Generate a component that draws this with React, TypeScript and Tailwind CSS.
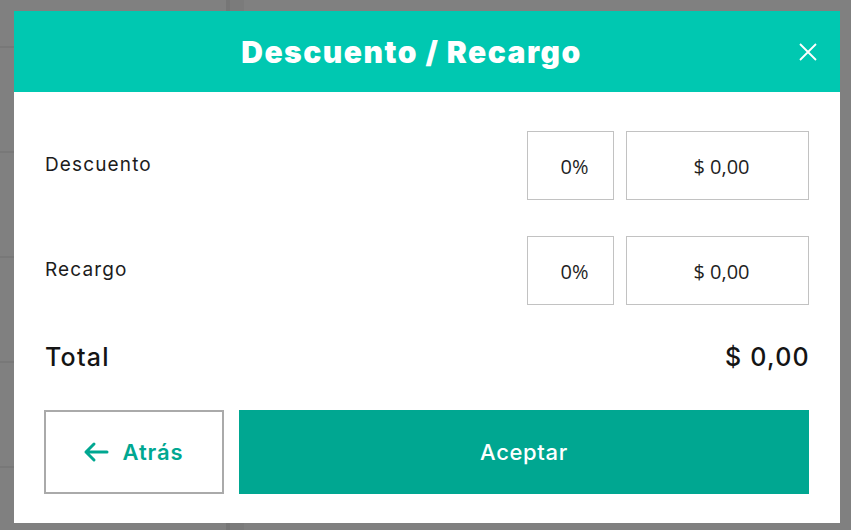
import { useState } from "react";

function BackgroundPage() {
  // dimmed page behind the modal
  const rows = [0, 1, 2, 3, 4, 5];
  return (
    <div className="absolute inset-0 flex bg-[#808080]">
      <div className="w-[226px] flex flex-col pt-[46px]">
        {rows.map((r) => (
          <div key={r} className="shrink-0 h-[105px] border-t-[2px] border-[#787878]" />
        ))}
      </div>
      <div className="w-[4px] bg-[#767676]" />
      <div className="w-[14px] bg-[#7b7b7b]" />
      <div className="flex-1" />
    </div>
  );
}

function ValueBox({ value, wide }: { value: string; wide?: boolean }) {
  return (
    <div
      className={
        (wide ? "w-[183px]" : "w-[87px]") +
        " h-[69px] border border-[#c2c2c2] flex items-center justify-center pt-[3px] pl-[8px] text-[20px] text-[#1f1f1f]"
      }
      style={{ fontFamily: '"Open Sans", "Noto Sans", sans-serif' }}
    >
      {value}
    </div>
  );
}

function App() {
  const [descuento] = useState({ pct: "0%", monto: "$ 0,00" });
  const [recargo] = useState({ pct: "0%", monto: "$ 0,00" });

  return (
    <div className="relative w-[851px] h-[530px] overflow-hidden" style={{ fontFamily: 'Inter, "Noto Sans", sans-serif' }}>
      <BackgroundPage />
      <div className="relative pt-[11px] pl-[14px]">
        <div className="w-[826px] h-[512px] bg-white flex flex-col">
          <div className="relative h-[81px] bg-[#00c8b1] flex items-center justify-center pr-[31px]">
            <h1 className="text-white text-[30px] font-black tracking-[0.05em] mt-[2px]">Descuento / Recargo</h1>
            <button className="absolute right-[22px] top-[31px] w-[20px] h-[20px] flex items-center justify-center">
              <svg width="20" height="20" viewBox="0 0 20 20" fill="none" stroke="white" strokeWidth="1.8">
                <path d="M2 2 L18 18 M18 2 L2 18" />
              </svg>
            </button>
          </div>

          <div className="flex flex-col px-[31px] pt-[39px]">
            <div className="flex items-center h-[69px]">
              <span className="flex-1 text-[19px] text-[#1c1c1c] tracking-[0.06em] -mt-[1px]">Descuento</span>
              <div className="flex gap-[12px]">
                <ValueBox value={descuento.pct} />
                <ValueBox value={descuento.monto} wide />
              </div>
            </div>

            <div className="flex items-center h-[69px] mt-[36px]">
              <span className="flex-1 text-[19px] text-[#1c1c1c] tracking-[0.06em] -mt-[1px]">Recargo</span>
              <div className="flex gap-[12px]">
                <ValueBox value={recargo.pct} />
                <ValueBox value={recargo.monto} wide />
              </div>
            </div>

            <div className="flex items-center justify-between h-[32px] mt-[37px] text-[25px] font-medium text-[#141414] tracking-[0.05em]">
              <span>Total</span>
              <span className="-mr-[1px]">$ 0,00</span>
            </div>

            <div className="flex gap-[15px] mt-[36px] -ml-[1px]">
              <button className="w-[180px] h-[84px] border-[2px] border-[#aaaaaa] flex items-center justify-center gap-[14px] pr-[2px] text-[#00a791] text-[22px] font-semibold tracking-[0.04em]">
                <svg width="26" height="22" viewBox="0 0 26 22" fill="none" stroke="#00a791" strokeWidth="3" strokeLinecap="round" strokeLinejoin="round">
                  <path d="M24 11 H3 M11 3 L3 11 L11 19" />
                </svg>
                <span>Atrás</span>
              </button>
              <button className="flex-1 h-[84px] bg-[#00a791] text-white text-[22px] font-medium tracking-[0.03em]">
                Aceptar
              </button>
            </div>
          </div>
        </div>
      </div>
    </div>
  );
}

export default App;
